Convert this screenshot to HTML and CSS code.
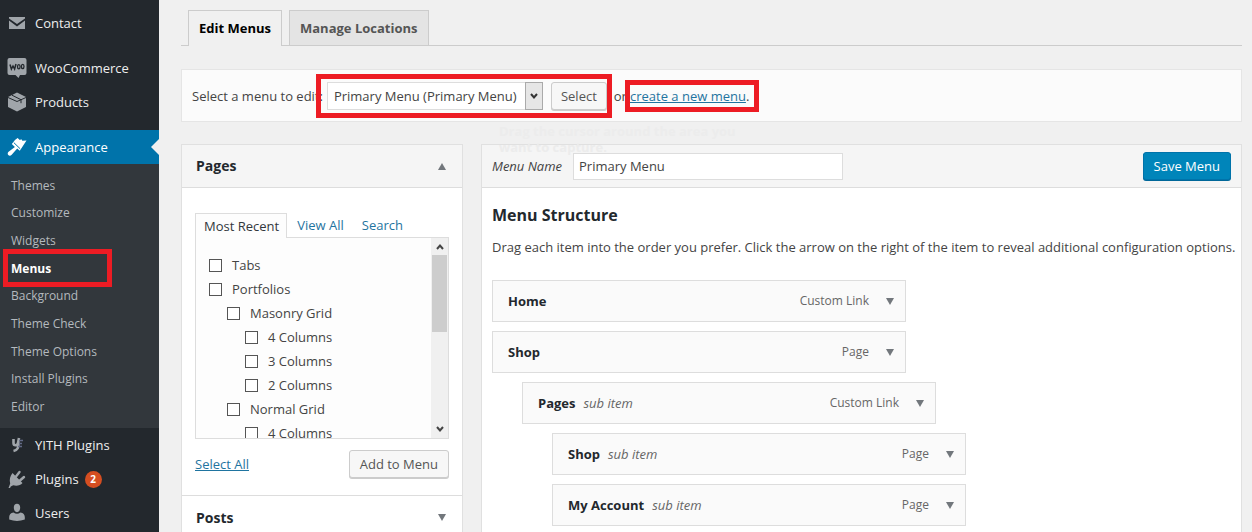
FILE: index.html
```html
<!DOCTYPE html>
<html lang="en">
<head>
<meta charset="utf-8">
<title>Menus</title>
<link rel="stylesheet" href="styles.css">
</head>
<body>
<div class="app">
  <nav class="sidebar" aria-label="Admin menu">
    <a class="nav-item" href="#"><svg class="icon" viewBox="0 0 20 20"><path fill="currentColor" d="M2 4h16v1.500L10 11 2 5.500zM2 7.500l8 6 8-6V16H2z"/></svg>Contact</a>
    <div class="nav-gap"></div>
    <a class="nav-item" href="#"><svg class="icon" viewBox="0 0 20 20"><path fill="currentColor" d="M2.500 0h15A2 2 0 0 1 19.500 2v13a2 2 0 0 1-2 2H13l-1.500 3-3-3h-6a2 2 0 0 1-2-2V2a2 2 0 0 1 2-2z"/><path fill="none" stroke="#23282d" stroke-width="1.500" d="M3 6.500l1.400 4.500L6 8l1.600 3L9 6"/><ellipse cx="11.800" cy="8.700" rx="1.300" ry="2.100" fill="none" stroke="#23282d" stroke-width="1.300"/><ellipse cx="15.700" cy="8.500" rx="1.300" ry="2.100" fill="none" stroke="#23282d" stroke-width="1.300"/></svg>WooCommerce</a>
    <a class="nav-item" href="#"><svg class="icon" viewBox="0 0 20 20"><path fill="currentColor" d="M10 .5l9 4.500v10l-9 4.500L1 15V5z"/><path fill="none" stroke="#23282d" stroke-width="1" d="M1 5.500l9 4 9-4M5 3.200l9 4.500v3.500"/></svg>Products</a>
    <div class="nav-gap"></div>
    <a class="nav-item current" href="#"><svg class="icon" viewBox="0 0 20 20"><path fill="currentColor" d="M8 3l2.600-2 2.200 2 1.600-.8 1 1.600 4.100-.3-6.700 10.300-2.600-2.200-5.500 6.200c-1 1.100-2.500 1.200-3.400.3s-.8-2.400.3-3.300l6.300-4.700L4.800 7z"/><path stroke="#0073aa" stroke-width="1" d="M6.800 5.600l6.400 6.200"/></svg>Appearance</a>
    <ul class="submenu">
      <li><a href="#">Themes</a></li>
      <li><a href="#">Customize</a></li>
      <li><a href="#">Widgets</a></li>
      <li class="marked"><a class="active" href="#">Menus</a><span class="mark mark-menus"></span></li>
      <li><a href="#">Background</a></li>
      <li><a href="#">Theme Check</a></li>
      <li><a href="#">Theme Options</a></li>
      <li><a href="#">Install Plugins</a></li>
      <li><a href="#">Editor</a></li>
    </ul>
    <a class="nav-item" href="#"><svg class="icon" viewBox="0 0 20 20"><path fill="none" stroke="currentColor" stroke-width="2.600" d="M6.500 4v4c0 3 4 3 4.500 0l1-5M11.500 7.500c0 5-.5 7.500-5 8.500"/><path stroke="#626a86" stroke-width="1.500" d="M12 5.500h4M12 8.500h3M11 11.500h4"/></svg>YITH Plugins</a>
    <a class="nav-item" href="#"><svg class="icon" viewBox="0 0 20 20"><path fill="currentColor" d="M5.500 4L15.500 14c-2 2.500-6 3.200-9.300 2.200L3.800 17.500 3 19H1.500l1.700-4.500C2.200 11 3 7 5.500 4z"/><path fill="none" stroke="currentColor" stroke-width="2.400" stroke-linecap="round" d="M9 7.500L12.500 3M13 11.500L17 8"/></svg>Plugins<span class="badge">2</span></a>
    <a class="nav-item" href="#"><svg class="icon" viewBox="0 0 20 20"><path fill="currentColor" d="M10 .8c2 0 3.200 1.600 3.200 3.800S12 9.200 10 9.200 6.800 6.800 6.800 4.600 8 .8 10 .8zM6.500 9.500Q10 12 13.500 9.500c2.800.5 4.300 2.200 4.300 4.500v2.600Q10 19.500 2.200 16.600V14c0-2.300 1.500-4 4.300-4.500z"/></svg>Users</a>
  </nav>

  <main class="content">
    <div class="tabs">
      <a class="tab tab-active" href="#">Edit Menus</a>
      <a class="tab" href="#">Manage Locations</a>
    </div>

    <form class="manage">
      <label for="menu">Select a menu to edit:</label>
      <div class="picker">
        <div class="select-wrap">
          <select id="menu"><option>Primary Menu (Primary Menu)</option></select>
          <span class="select-arrow"><svg viewBox="0 0 10 10"><path fill="none" stroke="#333" stroke-width="2" d="M2 3l3 3.500L8 3"/></svg></span>
        </div>
        <button class="button" type="button">Select</button>
        <span class="mark mark-picker"></span>
      </div>
      <span class="or">or</span>
      <span class="create"><a href="#">create a new menu</a>.<span class="mark mark-create"></span></span>
      <p class="capture-hint">Drag the cursor around the area you want to capture.</p>
    </form>

    <div class="columns">
      <section class="panel">
        <div class="panel-head"><h3>Pages</h3><svg class="toggle" viewBox="0 0 8 7"><path fill="currentColor" d="M4 0l4 7H0z"/></svg></div>
        <div class="pages-body">
          <div class="page-tabs">
            <a class="page-tab page-tab-active" href="#">Most Recent</a>
            <a class="page-tab" href="#">View All</a>
            <a class="page-tab" href="#">Search</a>
          </div>
          <div class="page-list">
            <div class="checks">
              <label><input type="checkbox">Tabs</label>
              <label><input type="checkbox">Portfolios</label>
              <label class="level-1"><input type="checkbox">Masonry Grid</label>
              <label class="level-2"><input type="checkbox">4 Columns</label>
              <label class="level-2"><input type="checkbox">3 Columns</label>
              <label class="level-2"><input type="checkbox">2 Columns</label>
              <label class="level-1"><input type="checkbox">Normal Grid</label>
              <label class="level-2"><input type="checkbox">4 Columns</label>
            </div>
            <div class="scrollbar">
              <svg viewBox="0 0 10 10"><path fill="none" stroke="#444" stroke-width="2" d="M2 7l3-3.500L8 7"/></svg>
              <span class="thumb"></span>
              <svg viewBox="0 0 10 10"><path fill="none" stroke="#444" stroke-width="2" d="M2 3l3 3.500L8 3"/></svg>
            </div>
          </div>
          <div class="page-actions"><a href="#">Select All</a><button class="button" type="button">Add to Menu</button></div>
        </div>
        <div class="panel-head panel-closed"><h3>Posts</h3><svg class="toggle" viewBox="0 0 8 7"><path fill="currentColor" d="M0 0h8L4 7z"/></svg></div>
      </section>

      <section class="panel">
        <div class="panel-head editor-head">
          <label for="menu-name">Menu Name</label>
          <input id="menu-name" type="text" value="Primary Menu">
          <button class="button primary" type="button">Save Menu</button>
        </div>
        <div class="editor-body">
          <h2>Menu Structure</h2>
          <p>Drag each item into the order you prefer. Click the arrow on the right of the item to reveal additional configuration options.</p>
          <ul class="menu-items">
            <li><b>Home</b><span class="kind">Custom Link</span><svg class="toggle" viewBox="0 0 8 7"><path fill="currentColor" d="M0 0h8L4 7z"/></svg></li>
            <li><b>Shop</b><span class="kind">Page</span><svg class="toggle" viewBox="0 0 8 7"><path fill="currentColor" d="M0 0h8L4 7z"/></svg></li>
            <li class="depth-1"><b>Pages</b><i>sub item</i><span class="kind">Custom Link</span><svg class="toggle" viewBox="0 0 8 7"><path fill="currentColor" d="M0 0h8L4 7z"/></svg></li>
            <li class="depth-2"><b>Shop</b><i>sub item</i><span class="kind">Page</span><svg class="toggle" viewBox="0 0 8 7"><path fill="currentColor" d="M0 0h8L4 7z"/></svg></li>
            <li class="depth-2"><b>My Account</b><i>sub item</i><span class="kind">Page</span><svg class="toggle" viewBox="0 0 8 7"><path fill="currentColor" d="M0 0h8L4 7z"/></svg></li>
          </ul>
        </div>
      </section>
    </div>
  </main>
</div>
</body>
</html>
```
FILE: styles.css
```css
* { box-sizing: border-box; }
body {
  margin: 0;
  background: #f0f0f0;
  color: #444;
  font: 13px/20px "Open Sans", "Noto Sans", sans-serif;
}
h2, h3, p, ul { margin: 0; padding: 0; }
ul { list-style: none; }
a { color: #1f74a0; }
button, input, select { font: inherit; color: inherit; margin: 0; }

.app { display: flex; height: 100vh; overflow: hidden; }

/* Sidebar */
.sidebar { flex: 0 0 159px; padding-top: 6px; background: #23282d; }
.nav-item {
  display: flex;
  align-items: center;
  height: 34px;
  padding-left: 7px;
  color: #eee;
  text-decoration: none;
}
.icon { width: 20px; height: 20px; margin-right: 8px; color: #a0a5aa; }
.nav-gap { height: 11px; }
.current { position: relative; background: #0073aa; color: #fff; }
.current .icon { color: #fff; }
.current::after {
  content: "";
  position: absolute;
  right: 0;
  top: 9px;
  border: 8px solid transparent;
  border-left-width: 0;
  border-right-color: #f0f0f0;
}
.submenu {
  display: grid;
  grid-template-rows: repeat(9, 1fr);
  align-items: center;
  height: 264px;
  padding: 8px 11px 7px;
  background: #32373c;
  font-size: 12px;
}
.submenu a { color: #b4b9be; text-decoration: none; }
.submenu .active { color: #fff; font-weight: 700; }
.marked { position: relative; }
.badge {
  width: 17px;
  height: 17px;
  margin-left: 6px;
  border-radius: 9px;
  background: #d54e21;
  color: #fff;
  font-size: 10px;
  font-weight: 700;
  line-height: 17px;
  text-align: center;
}

/* Red callout frames */
.mark { position: absolute; border: 5px solid #ed1c24; pointer-events: none; }
.mark-menus { left: -8px; top: -10px; width: 109px; height: 38px; }
.mark-picker { inset: -8px -5px -8px -11px; }
.mark-create { inset: -6px -10px -6px -5px; }

/* Top tabs */
.content { flex: 1; min-width: 0; padding: 10px 10px 0 22px; }
.tabs { display: flex; gap: 7px; padding-left: 7px; border-bottom: 1px solid #ccc; }
.tab {
  padding: 7px 10px;
  border: 1px solid #ccc;
  border-bottom: 0;
  background: #e4e4e4;
  color: #555;
  font-size: 13px;
  font-weight: 700;
  text-decoration: none;
}
.tab-active { height: 36px; margin-bottom: -1px; background: #f0f0f0; color: #000; }

.manage {
  position: relative;
  display: flex;
  align-items: center;
  height: 53px;
  margin-top: 23px;
  padding-left: 10px;
  border: 1px solid #e5e5e5;
  background: #fbfbfb;
}
.picker { position: relative; display: flex; gap: 8px; margin: 0 7px 0 4px; }
.picker .button { padding: 0 9px; }
.select-wrap { position: relative; }
select {
  appearance: none;
  width: 216px;
  height: 28px;
  padding: 0 20px 0 6px;
  border: 1px solid #ddd;
  border-radius: 0;
  background: #fff;
}
.select-arrow {
  position: absolute;
  right: 0;
  top: 0;
  display: grid;
  place-items: center;
  width: 18px;
  height: 28px;
  border: 1px solid #aaa;
  background: #e6e6e6;
  pointer-events: none;
}
.select-arrow svg { width: 10px; height: 10px; }
.button {
  height: 28px;
  padding: 0 10px;
  border: 1px solid #ccc;
  border-radius: 3px;
  background: #f7f7f7;
  box-shadow: 0 1px 0 #ccc;
  color: #555;
}
.or { margin-right: 3px; }
.create { position: relative; }
.capture-hint {
  position: absolute;
  left: 317px;
  top: 53px;
  width: 240px;
  color: #ececec;
  font-weight: 700;
  line-height: 16px;
}

/* Two columns */
.columns { display: grid; grid-template-columns: 282px 1fr; gap: 18px; margin-top: 22px; align-items: start; }
.panel { border: 1px solid #e0e0e0; background: #fff; }
.panel-head {
  display: flex;
  align-items: center;
  height: 43px;
  padding: 0 16px 0 14px;
  border-bottom: 1px solid #ddd;
  background: #f5f5f5;
}
.panel-closed { border-top: 1px solid #ddd; background: #fff; height: 45px; }
h3 { flex: 1; color: #23282d; font-size: 14px; }
.toggle { width: 8px; height: 7px; color: #72777c; }
.pages-body { padding: 25px 13px 17px; }
.page-tabs { display: flex; height: 24px; }
.page-tab { padding: 2px 8px 0 10px; text-decoration: none; }
.page-tab-active {
  position: relative;
  height: 25px;
  padding: 2px 7px 0 8px;
  border: 1px solid #ddd;
  border-bottom: 0;
  background: #fdfdfd;
  color: #32373c;
  z-index: 1;
}
.page-list { display: flex; height: 202px; border: 1px solid #ddd; background: #fdfdfd; }
.checks { flex: 1; padding: 15px 13px 0; overflow: hidden; }
.checks label { display: flex; align-items: center; gap: 10px; height: 24px; }
.checks .level-1 { padding-left: 18px; }
.checks .level-2 { padding-left: 36px; }
.checks input { appearance: none; width: 13px; height: 13px; border: 1px solid #555; background: #fff; }
.scrollbar { display: flex; flex-direction: column; width: 17px; padding: 4px 1px; background: #f0f0f0; }
.scrollbar svg { width: 10px; height: 10px; margin: 0 auto; }
.thumb { height: 77px; margin: 3px 0 auto; background: #cdcdcd; }
.page-actions { display: flex; align-items: center; justify-content: space-between; margin-top: 11px; }

.editor-head { padding: 0 10px; }
.editor-head label { font-style: italic; margin-right: 11px; }
.editor-head input { width: 270px; height: 27px; padding: 0 5px; border: 1px solid #ddd; background: #fff; }
.primary { margin-left: auto; border-color: #0073aa; background: #0085ba; box-shadow: 0 1px 0 #006799; color: #fff; }
.editor-body { padding: 17px 0 17px 10px; }
h2 { color: #23282d; font-size: 16px; line-height: 20px; }
.editor-body p { margin: 12px 0 23px; }
.menu-items { display: grid; gap: 9px; }
.menu-items li {
  display: flex;
  align-items: center;
  width: 414px;
  height: 42px;
  padding: 0 11px 0 15px;
  border: 1px solid #ddd;
  background: #fafafa;
}
.menu-items .depth-1 { margin-left: 30px; }
.menu-items .depth-2 { margin-left: 60px; }
.menu-items b { color: #23282d; }
.menu-items i { margin-left: 8px; color: #666; }
.kind { margin: 0 17px 0 auto; color: #666; font-size: 12px; }
```
